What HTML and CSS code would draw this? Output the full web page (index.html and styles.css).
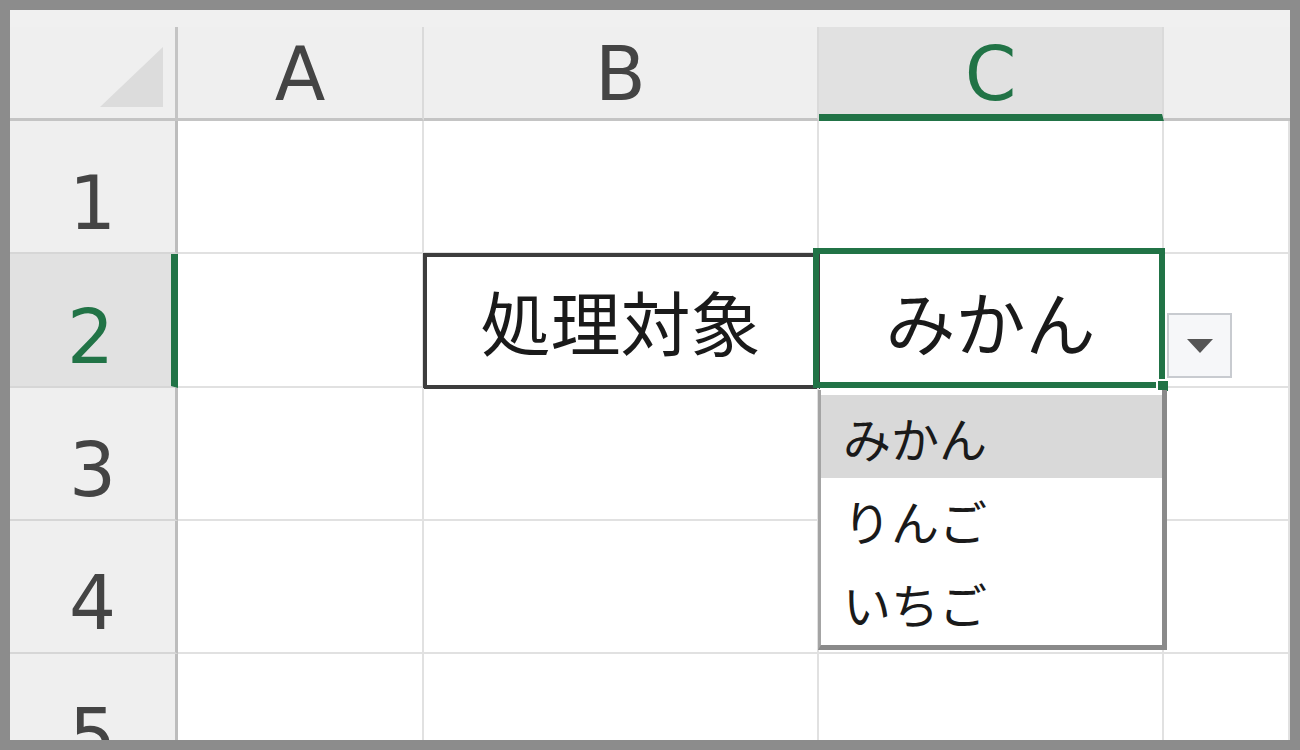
FILE: index.html
```html
<!DOCTYPE html>
<html lang="ja">
<head>
  <meta charset="UTF-8">
  <meta name="viewport" content="width=device-width, initial-scale=1.0">
  <title>入力規則のドロップダウン</title>
  <link rel="stylesheet" href="styles.css">
</head>
<body>

  <div class="frame">
    <div class="sheet">
      <!-- Column headers -->
      <div class="corner">
        <svg width="63" height="60" viewBox="0 0 63 60"><polygon points="0,60 63,60 63,0" fill="#dcdcdc"/></svg>
      </div>
      <div class="colhead">A</div>
      <div class="colhead">B</div>
      <div class="colhead active">C</div>
      <div class="colhead last"></div>

      <!-- Row 1 -->
      <div class="rowhead">1</div>
      <div class="cell"></div>
      <div class="cell"></div>
      <div class="cell"></div>
      <div class="cell"></div>

      <!-- Row 2 -->
      <div class="rowhead active">2</div>
      <div class="cell"></div>
      <div class="cell boxed">処理対象</div>
      <div class="cell current">
        みかん
        <div class="selection"><span class="handle"></span></div>
        <div class="drop-btn">
          <svg width="26" height="14" viewBox="0 0 26 14"><polygon points="0,0 26,0 13,14" fill="#555"/></svg>
        </div>
        <ul class="drop-list">
          <li class="hover">みかん</li>
          <li>りんご</li>
          <li>いちご</li>
        </ul>
      </div>
      <div class="cell"></div>

      <!-- Row 3 -->
      <div class="rowhead">3</div>
      <div class="cell"></div>
      <div class="cell"></div>
      <div class="cell"></div>
      <div class="cell"></div>

      <!-- Row 4 -->
      <div class="rowhead">4</div>
      <div class="cell"></div>
      <div class="cell"></div>
      <div class="cell"></div>
      <div class="cell"></div>

      <!-- Row 5 (cut off by the frame) -->
      <div class="rowhead">5</div>
      <div class="cell"></div>
      <div class="cell"></div>
      <div class="cell"></div>
      <div class="cell"></div>
    </div>
  </div>

</body>
</html>
```

FILE: styles.css
```css
body {
  margin: 0;
  padding: 0;
  font-family: "Noto Sans CJK JP", sans-serif;
}
.frame {
  width: 1300px;
  height: 750px;
  box-sizing: border-box;
  border: 10px solid #8c8c8c;
  padding-top: 17px;
  background-color: #f0f0f0;
  overflow: hidden;
}
.sheet {
  display: grid;
  grid-template-columns: 168px 246px 395px 345px 1fr;
  grid-template-rows: 94px 133px 134px 133px 133px 133px;
  background-color: #fff;
}

/* headers */
.corner, .colhead, .rowhead {
  box-sizing: border-box;
  background-color: #efefef;
  color: #444;
  font-family: "DejaVu Sans", sans-serif;
  font-size: 74px;
  line-height: 1;
  display: flex;
  justify-content: center;
  align-items: flex-end;
}
.corner {
  justify-content: flex-end;
  padding: 0 12px 11px 0;
  border-right: 3px solid #c4c4c4;
  border-bottom: 3px solid #c4c4c4;
}
.colhead {
  padding-bottom: 7px;
  border-right: 2px solid #dadada;
  border-bottom: 3px solid #c4c4c4;
}
.colhead.last {
  border-right: none;
}
.colhead.active {
  background-color: #e1e1e1;
  color: #217346;
  padding-bottom: 3px;
  border-bottom: 7px solid #217346;
}
.rowhead {
  padding-bottom: 12px;
  border-right: 3px solid #bdbdbd;
  border-bottom: 2px solid #d6d6d6;
}
.rowhead.active {
  background-color: #e1e1e1;
  color: #217346;
  border-right: 7px solid #217346;
}

/* cells */
.cell {
  box-sizing: border-box;
  border-right: 2px solid #e1e1e1;
  border-bottom: 2px solid #e1e1e1;
  display: flex;
  justify-content: center;
  align-items: center;
  font-size: 70px;
  color: #1a1a1a;
}
.cell.boxed {
  outline: 4px solid #3d3d3d;
  outline-offset: -3px;
}
.cell.current {
  position: relative;
}
.selection {
  position: absolute;
  top: -6px;
  left: -6px;
  right: -3px;
  bottom: -2px;
  border: 6px solid #217346;
  z-index: 2;
}
.handle {
  position: absolute;
  right: -9px;
  bottom: -9px;
  width: 10px;
  height: 10px;
  background-color: #217346;
  box-shadow: -2px -2px 0 #fff;
}

/* dropdown */
.drop-btn {
  position: absolute;
  left: 348px;
  top: 59px;
  width: 65px;
  height: 65px;
  box-sizing: border-box;
  border: 2px solid #c8cbd0;
  background-color: #f6f7f9;
  display: flex;
  justify-content: center;
  align-items: center;
  z-index: 3;
}
.drop-list {
  position: absolute;
  left: -1px;
  top: 136px;
  width: 349px;
  height: 260px;
  box-sizing: border-box;
  margin: 0;
  padding: 5px 0 0 0;
  list-style: none;
  background-color: #fff;
  border: 3px solid #a4a4a4;
  border-top: none;
  border-right: 5px solid #8a8a8a;
  border-bottom: 5px solid #8a8a8a;
  z-index: 3;
}
.drop-list li {
  height: 83px;
  padding-left: 22px;
  display: flex;
  align-items: center;
  font-size: 48px;
  color: #1a1a1a;
}
.drop-list li.hover {
  background-color: #d9d9d9;
}
```
